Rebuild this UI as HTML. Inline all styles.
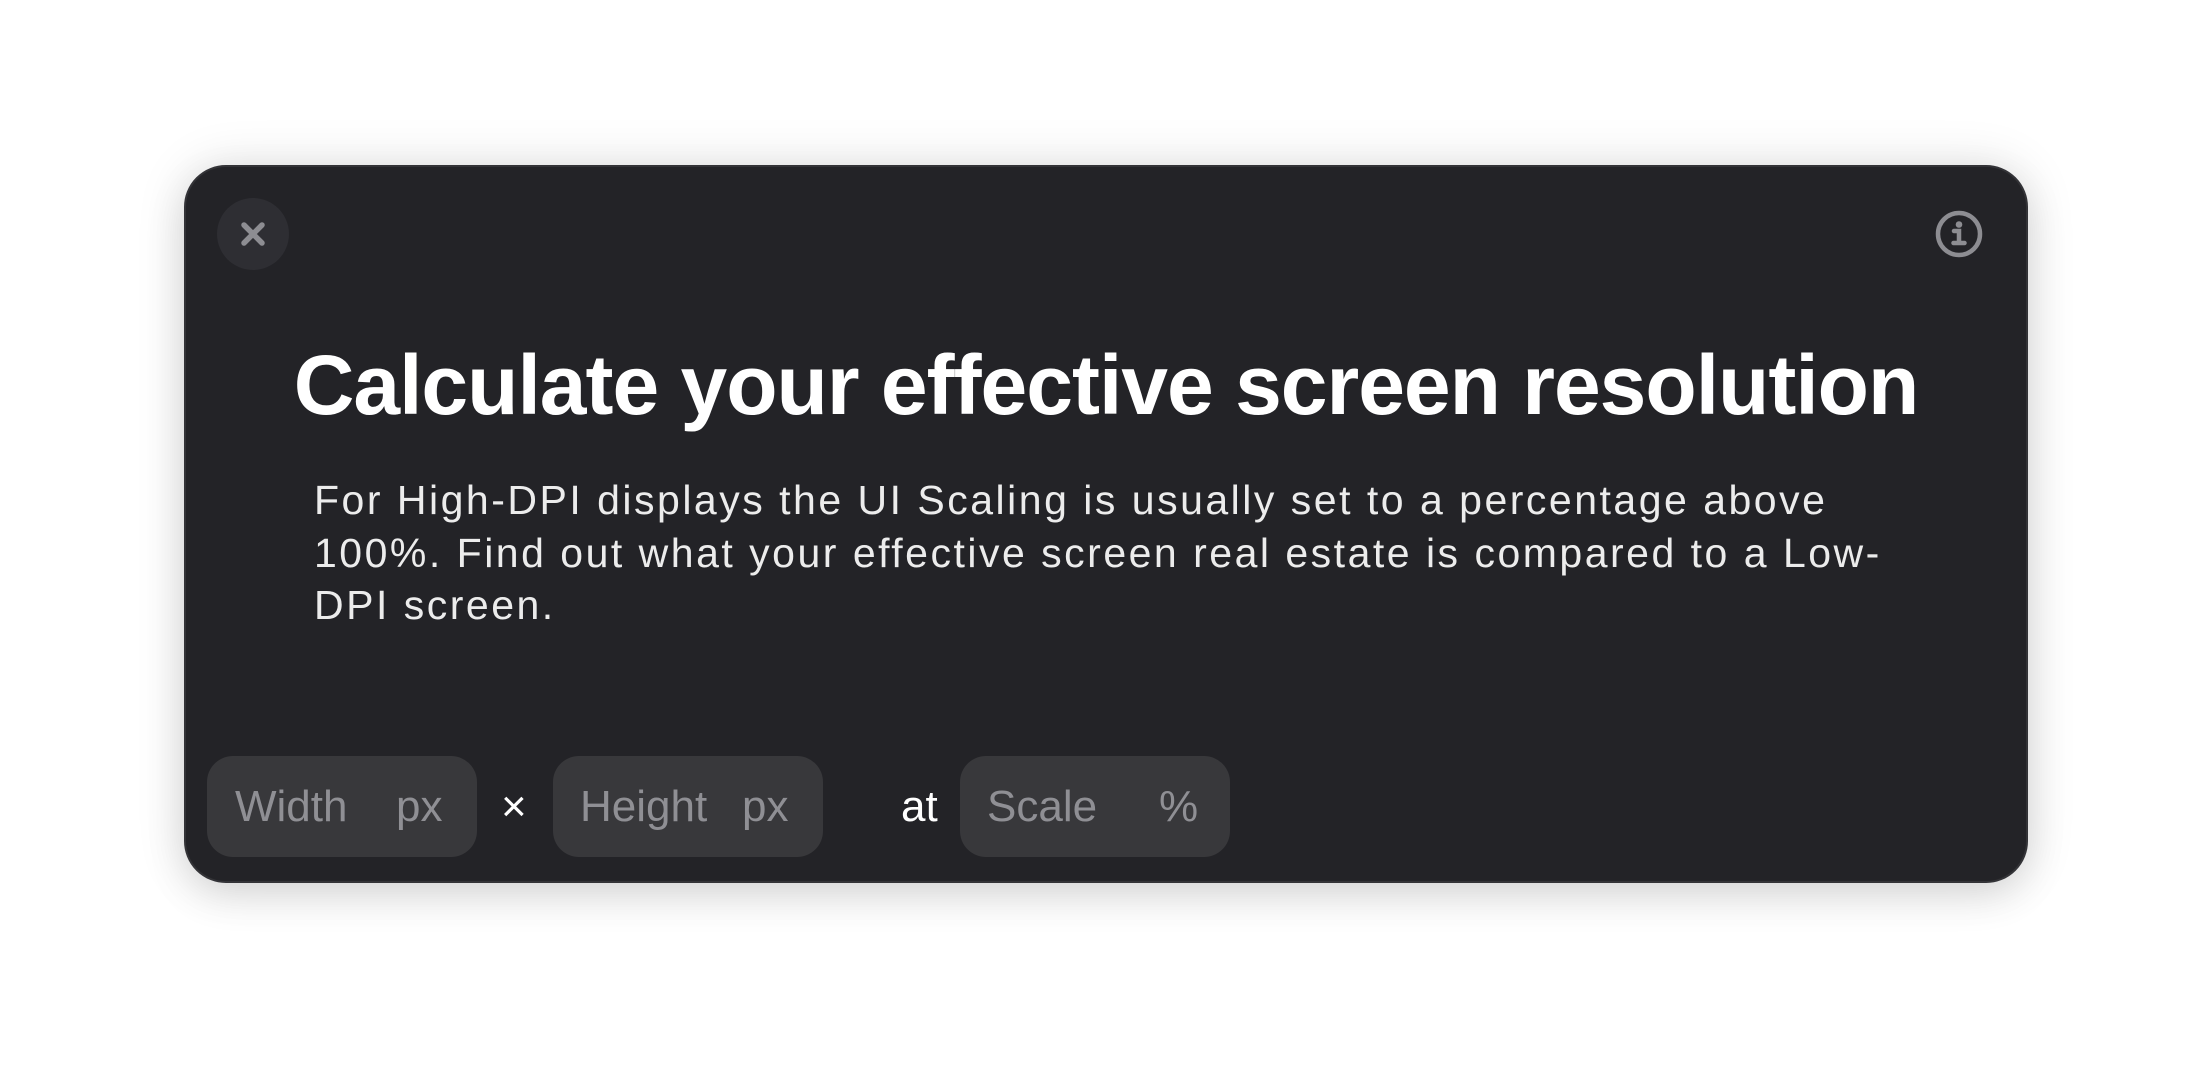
<!DOCTYPE html>
<html><head><meta charset="utf-8"><style>
html,body{margin:0;padding:0;background:#fff;width:2211px;height:1083px;overflow:hidden;font-family:"Liberation Sans",sans-serif;}
.card{position:absolute;left:184px;top:165px;width:1840px;height:714px;background:#232327;border:2px solid #333337;border-radius:42px;box-shadow:0 0 50px rgba(0,0,0,.12),0 14px 40px rgba(0,0,0,.1);}
.close{position:absolute;left:31px;top:31px;width:72px;height:72px;border-radius:50%;background:#2e2e33;}
.info{position:absolute;left:1749px;top:43px;}
h1{position:absolute;left:0;width:100%;top:168px;margin:0;text-align:center;color:#fff;font-size:84px;font-weight:bold;letter-spacing:-1.0px;line-height:100px;}
p{position:absolute;left:128px;top:307px;margin:0;color:#ececec;font-size:41px;line-height:52.5px;letter-spacing:2.5px;white-space:nowrap;}
.inp{position:absolute;top:589px;height:101px;width:270px;background:#38383b;border-radius:26px;color:#8f8f94;font-size:44px;}
.inp span{position:absolute;top:26px;}
.t{position:absolute;color:#fff;font-size:44px;top:615px;}
</style></head><body>
<div class="card">
<div class="close"><svg width="72" height="72" viewBox="0 0 72 72"><path d="M27 27L45 45M45 27L27 45" stroke="#8d8d92" stroke-width="5.5" stroke-linecap="round"/></svg></div>
<svg class="info" width="48" height="48" viewBox="0 0 48 48"><circle cx="24" cy="24" r="21" fill="none" stroke="#8d8d92" stroke-width="4.5"/><circle cx="24" cy="14.5" r="3.3" fill="#8d8d92"/><path d="M19 21h5v11M18.5 33h11" stroke="#8d8d92" stroke-width="4.5" fill="none" stroke-linecap="round"/></svg>
<h1>Calculate your effective screen resolution</h1>
<p>For High-DPI displays the UI Scaling is usually set to a percentage above<br>100%. Find out what your effective screen real estate is compared to a Low-<br>DPI screen.</p>
<div class="inp" style="left:21px"><span style="left:28px">Width</span><span style="left:189px">px</span></div>
<div class="t" style="left:315px">×</div>
<div class="inp" style="left:367px"><span style="left:27px">Height</span><span style="left:189px">px</span></div>
<div class="t" style="left:715px">at</div>
<div class="inp" style="left:774px"><span style="left:27px">Scale</span><span style="left:199px">%</span></div>
</div>
</body></html>
